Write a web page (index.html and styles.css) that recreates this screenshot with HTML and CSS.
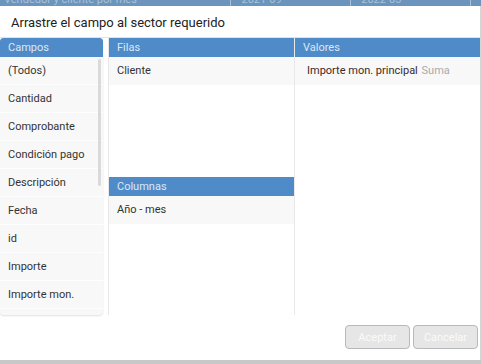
FILE: index.html
```html
<!DOCTYPE html>
<html lang="es">
<head>
  <meta charset="UTF-8">
  <meta name="viewport" content="width=device-width, initial-scale=1.0">
  <title>Campos de la tabla</title>
  <link rel="stylesheet" href="styles.css">
</head>
<body>
  <!-- grid behind the dialog, only its lower edge shows -->
  <div class="backdrop">
    <div class="backdrop-row">
      <span class="bd-cell bd-wide">Vendedor y cliente por mes</span>
      <span class="bd-cell">2021-09</span>
      <span class="bd-cell">2022-03</span>
      <span class="bd-cell bd-last"></span>
    </div>
  </div>

  <div class="dialog">
    <div class="dialog-title">Arrastre el campo al sector requerido</div>

    <div class="dialog-body">
      <!-- Fields -->
      <div class="panel fields">
        <div class="panel-header">Campos</div>
        <ul class="field-list">
          <li>(Todos)</li>
          <li>Cantidad</li>
          <li>Comprobante</li>
          <li>Condición pago</li>
          <li>Descripción</li>
          <li>Fecha</li>
          <li>id</li>
          <li>Importe</li>
          <li>Importe mon.</li>
          <li></li>
        </ul>
        <div class="scroll-thumb"></div>
      </div>

      <!-- Rows / Columns -->
      <div class="middle">
        <div class="area">
          <div class="panel-header">Filas</div>
          <div class="area-item">Cliente</div>
        </div>
        <div class="area">
          <div class="panel-header">Columnas</div>
          <div class="area-item">Año - mes</div>
        </div>
      </div>

      <!-- Values -->
      <div class="area values">
        <div class="panel-header">Valores</div>
        <div class="area-item">Importe mon. principal <span class="summary">Suma</span></div>
      </div>
    </div>

    <div class="dialog-footer">
      <button class="btn" disabled>Aceptar</button>
      <button class="btn" disabled>Cancelar</button>
    </div>
  </div>
</body>
</html>
```

FILE: styles.css
```css
body {
  margin: 0;
  font-family: Roboto, "Liberation Sans", sans-serif;
  background-color: #c8c8c8;
  color: #333;
  width: 481px;
  height: 364px;
  overflow: hidden;
}

.backdrop {
  height: 6px;
  overflow: hidden;
  background-color: #6b95bd;
}

.backdrop-row {
  display: flex;
  margin-top: -7px;
  height: 13px;
  font-size: 11px;
  line-height: 13px;
  color: #a9c2da;
}

.bd-cell {
  width: 120px;
  padding-left: 10px;
  border-right: 1px solid #a8c0d8;
  box-sizing: border-box;
}

.bd-wide {
  width: 232px;
  padding-left: 4px;
}

.bd-last {
  width: 10px;
  border-right: none;
}

.dialog {
  height: 354px;
  background-color: #fff;
  border-right: 1px solid #d6d6d6;
  display: flex;
  flex-direction: column;
}

.dialog-title {
  height: 28px;
  line-height: 28px;
  padding: 3px 0 0 11px;
  font-size: 13px;
  color: #222;
  border-bottom: 1px solid #e3e3e3;
}

.dialog-body {
  display: grid;
  grid-template-columns: 108px 187px 185px;
  height: 278px;
}

.panel-header {
  height: 19px;
  line-height: 19px;
  padding-left: 8px;
  font-size: 11px;
  background-color: #4f8bc9;
  color: #dce8f5;
}

.fields {
  position: relative;
  width: 103px;
  background-color: #f8f8f8;
  border-radius: 3px 3px 4px 4px;
  box-shadow: 0 1px 2px rgba(0, 0, 0, 0.12);
  overflow: hidden;
  height: 277px;
}

.fields .panel-header {
  border-radius: 3px 3px 0 0;
}

.field-list {
  list-style: none;
  margin: 0;
  padding: 0;
}

.field-list li {
  height: 27px;
  line-height: 28px;
  padding-left: 8px;
  font-size: 11px;
  border-bottom: 1px solid #fff;
}

.scroll-thumb {
  position: absolute;
  left: 98px;
  top: 21px;
  width: 3px;
  height: 127px;
  border-radius: 2px;
  background-color: #dadada;
}

.middle {
  display: flex;
  flex-direction: column;
  border-left: 1px solid #e8e8e8;
  border-right: 1px solid #e8e8e8;
  height: 277px;
}

.area {
  flex: 1;
}

.middle .area + .area {
  margin-top: 1px;
}

.area-item {
  height: 28px;
  line-height: 28px;
  padding-left: 8px;
  font-size: 11px;
  background-color: #f8f8f8;
}

.values .area-item {
  padding-left: 12px;
  color: #3a2a2a;
}

.summary {
  color: #aaa;
  margin-left: 1px;
}

.dialog-footer {
  display: flex;
  justify-content: flex-end;
  gap: 3px;
  padding: 9px 2px 0 0;
}

.btn {
  width: 65px;
  height: 24px;
  border: 1px solid #b9b9b9;
  border-radius: 4px;
  background-color: #e6e6e6;
  color: #fafafa;
  font-family: Roboto, "Liberation Sans", sans-serif;
  font-size: 11px;
}
```
